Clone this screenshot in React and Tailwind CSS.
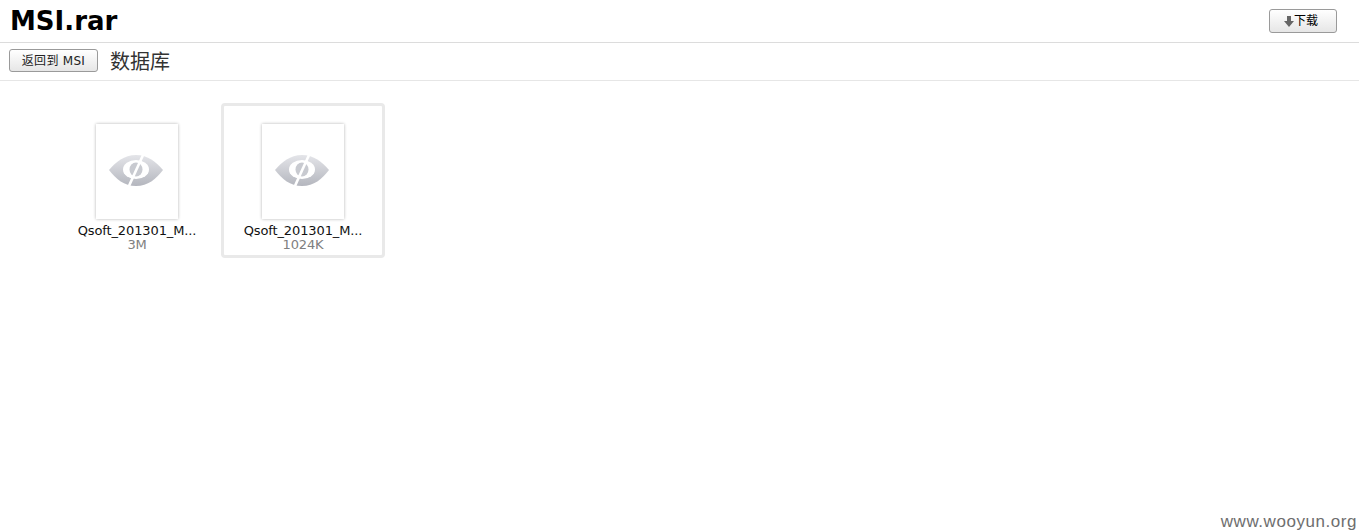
import React from 'react';

const files = [
  { name: 'Qsoft_201301_M...', size: '3M', selected: false },
  { name: 'Qsoft_201301_M...', size: '1024K', selected: true },
];

function EyeIcon({ id }) {
  return (
    <svg width="54" height="31" viewBox="0 0 54 31" className="mr-[2px]">
      <defs>
        <linearGradient id={id} x1="0" y1="0" x2="0" y2="1">
          <stop offset="0" stopColor="#e4e5e9" />
          <stop offset="1" stopColor="#b4b6be" />
        </linearGradient>
      </defs>
      <path fill={`url(#${id})`} d="M0 15C7 7 15 0 27 0C39 0 47 7 54 15C47 24 39 31 27 31C15 31 7 24 0 15Z" />
      <ellipse cx="27" cy="14.500" rx="13" ry="9.500" fill="#fff" />
      <ellipse cx="27" cy="14.500" rx="6.500" ry="7" fill="#c8cad0" />
      {/* slash through the eye */}
      <path d="M34.500 -1L19.500 32" stroke="#fff" strokeWidth="2.600" />
    </svg>
  );
}

function FileCard({ file, index }) {
  return (
    <div className={`flex h-[155px] w-[164px] flex-col items-center rounded-[4px] border-[3px] pt-[18px] ${file.selected ? 'border-[#e9e9e9]' : 'border-transparent'}`}>
      <div className="flex h-[95px] w-[82px] items-center justify-center bg-white pb-[2px] shadow-[0_0_3px_rgba(0,0,0,0.3)]">
        <EyeIcon id={`eye-${index}`} />
      </div>
      <div className="mt-[4px] text-center text-[13px] leading-[15px] tracking-[-0.12px] text-[#111]">{file.name}</div>
      <div className="text-center text-[13px] leading-[14px] tracking-[-0.12px] text-[#808080]">{file.size}</div>
    </div>
  );
}

export default function App() {
  return (
    <div className="relative h-[531px] w-full overflow-hidden bg-white font-['Verdana','DejaVu_Sans','Noto_Sans_CJK_SC',sans-serif]">
      {/* Title bar */}
      <div className="flex h-[43px] items-center justify-between border-b border-[#dcdcdc] pl-[10px] pr-[22px]">
        <h1 className="text-[26px] font-bold leading-none text-black">MSI.rar</h1>
        <button className="mb-[1px] flex h-[24px] w-[68px] items-center justify-center rounded-[3px] border border-[#9a9a9a] bg-gradient-to-b from-white to-[#e6e6e6] pr-[4px] pt-[1px] text-[12px] text-black">
          <svg width="10" height="11" viewBox="0 0 10 11" className="mt-[1px]">
            <path d="M3 0H7V5H10L5 11L0 5H3Z" fill="#666" />
          </svg>
          下载
        </button>
      </div>

      {/* Breadcrumb */}
      <div className="flex h-[38px] items-center border-b border-[#e6e6e6] pb-[2px] pl-[9px]">
        <button className="h-[23px] w-[89px] rounded-[3px] border border-[#9a9a9a] bg-gradient-to-b from-white to-[#e6e6e6] text-[12px] tracking-[0.3px] text-[#222]">
          返回到 MSI
        </button>
        <span className="ml-[12px] mt-[2px] text-[20px] leading-none text-[#333]">数据库</span>
      </div>

      {/* Files */}
      <div className="flex gap-[2px] pl-[55px] pt-[22px]">
        {files.map((file, i) => (
          <FileCard key={i} file={file} index={i} />
        ))}
      </div>

      {/* Watermark */}
      <div className="absolute bottom-[-1px] right-[2px] font-['Liberation_Sans',sans-serif] text-[17px] leading-[20px] tracking-[0.55px] text-[#6e6e6e]">
        www.wooyun.org
      </div>
    </div>
  );
}
